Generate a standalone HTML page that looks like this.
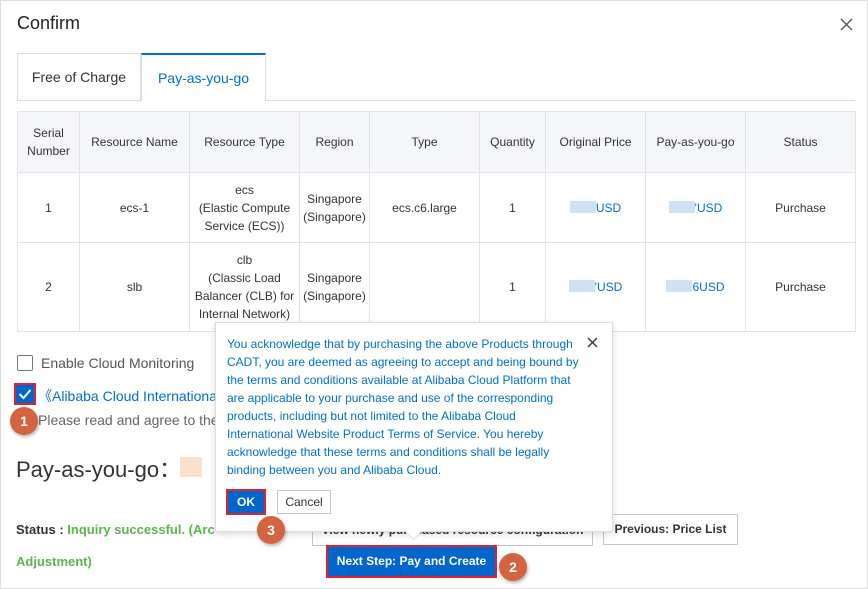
<!DOCTYPE html>
<html><head><meta charset="utf-8"><style>
*{box-sizing:border-box;margin:0;padding:0}
body{width:868px;height:589px;background:#fff;font-family:"Liberation Sans",sans-serif;color:#333;position:relative;overflow:hidden}
.frame{position:absolute;left:0;top:0;width:868px;height:589px;border:1px solid #ddd}
.a{position:absolute}
table{position:absolute;left:17px;top:111px;border-collapse:collapse;font-size:12px;color:#333}
td{border:1px solid #e3e3e3;text-align:center;line-height:18px;padding:0 3px}
thead td{background:#f5f6fa;height:61px}
.blur{display:inline-block;width:26px;height:12px;background:#cfe2f5;vertical-align:-1px}
.blue{color:#0070cc}
.badge{position:absolute;width:28px;height:28px;border-radius:50%;background:#d4633f;color:#fff;font-weight:bold;font-size:14px;text-align:center;line-height:28px;box-shadow:1px 2px 3px rgba(0,0,0,.3)}
.btn{position:absolute;border:1px solid #c4c6cc;background:#fff;font-size:12px;font-weight:bold;color:#333;text-align:center}
</style></head><body>
<div class="frame"></div>
<div class="a" style="left:17px;top:13px;font-size:18px;color:#222">Confirm</div>
<svg class="a" style="left:840px;top:18px" width="13" height="13"><path d="M1 1L12 12M12 1L1 12" stroke="#555" stroke-width="1.4"/></svg>
<div class="a" style="left:17px;top:100px;width:838px;border-top:1px solid #ddd"></div>
<div class="a" style="left:17px;top:53px;width:124px;height:47px;border:1px solid #ddd;border-bottom:none;background:#fff;font-size:14px;line-height:46px;text-align:center;color:#333">Free of Charge</div>
<div class="a" style="left:141px;top:53px;width:125px;height:48px;border:1px solid #ddd;border-top:2px solid #0070cc;border-bottom:none;background:#fff;font-size:14px;line-height:46px;text-align:center;color:#0070cc">Pay-as-you-go</div>
<table>
<thead><tr><td style="width:62px">Serial<br>Number</td><td style="width:110px">Resource Name</td><td style="width:110px">Resource Type</td><td style="width:70px">Region</td><td style="width:110px">Type</td><td style="width:66px">Quantity</td><td style="width:100px">Original Price</td><td style="width:100px">Pay-as-you-go</td><td style="width:110px">Status</td></tr></thead>
<tr style="height:70px"><td>1</td><td>ecs-1</td><td>ecs<br>(Elastic Compute<br>Service (ECS))</td><td>Singapore<br>(Singapore)</td><td>ecs.c6.large</td><td>1</td><td class="blue"><span class="blur"></span>USD</td><td class="blue"><span class="blur"></span>'USD</td><td>Purchase</td></tr>
<tr style="height:89px"><td>2</td><td>slb</td><td>clb<br>(Classic Load<br>Balancer (CLB) for<br>Internal Network)</td><td>Singapore<br>(Singapore)</td><td></td><td>1</td><td class="blue"><span class="blur"></span>'USD</td><td class="blue"><span class="blur"></span>6USD</td><td>Purchase</td></tr>
</table>
<div class="a" style="left:17px;top:355px;width:16px;height:16px;border:1px solid #777;border-radius:2px"></div>
<div class="a" style="left:41px;top:355px;font-size:14px;color:#555">Enable Cloud Monitoring</div>
<div class="a" style="left:14px;top:383px;width:22px;height:22px;border:2px solid #e0212e;background:#0066cc"><svg width="18" height="18"><path d="M3.5 9L7.5 13L14.5 5" stroke="#fff" stroke-width="2" fill="none"/></svg></div>
<div class="a" style="left:38px;top:386px;font-size:14px;color:#0070cc">《Alibaba Cloud International</div>
<div class="a" style="left:38px;top:412px;font-size:14px;color:#666">Please read and agree to the</div>
<div class="badge" style="left:10px;top:407px">1</div>
<div class="a" style="left:16px;top:452px;font-size:22px;color:#333">Pay-as-you-go：</div>
<div class="a" style="left:180px;top:457px;width:22px;height:20px;background:#fbe0cc"></div>
<div class="a" style="left:16px;top:522px;font-size:13px;font-weight:bold;color:#333">Status : <span style="color:#5ab74a">Inquiry successful. (Arc</span></div>
<div class="a" style="left:16px;top:554px;font-size:13px;font-weight:bold;color:#5ab74a">Adjustment)</div>
<div class="btn" style="left:312px;top:514px;width:281px;height:32px;line-height:30px">View newly purchased resource configuration</div>
<div class="btn" style="left:603px;top:514px;width:135px;height:31px;line-height:29px">Previous: Price List</div>
<div class="a" style="left:326px;top:545px;width:171px;height:33px;border:2px solid #e0212e;background:#0066cc;color:#fff;font-size:12px;font-weight:bold;text-align:center;line-height:29px">Next Step: Pay and Create</div>
<div class="badge" style="left:499px;top:553px">2</div>
<div class="a" style="left:215px;top:322px;width:398px;height:210px;background:#fff;border:1px solid #ddd;box-shadow:0 2px 6px rgba(0,0,0,.15)"></div>
<div class="a" style="left:408px;top:527px;width:11px;height:11px;background:#fff;border-right:1px solid #ddd;border-bottom:1px solid #ddd;transform:rotate(45deg)"></div>
<div class="a" style="left:227px;top:335px;width:355px;font-size:12px;line-height:18px;color:#0070cc">You acknowledge that by purchasing the above Products through CADT, you are deemed as agreeing to accept and being bound by the terms and conditions available at Alibaba Cloud Platform that are applicable to your purchase and use of the corresponding products, including but not limited to the Alibaba Cloud International Website Product Terms of Service. You hereby acknowledge that these terms and conditions shall be legally binding between you and Alibaba Cloud.</div>
<svg class="a" style="left:587px;top:337px" width="11" height="11"><path d="M1 1L10 10M10 1L1 10" stroke="#333" stroke-width="1.4"/></svg>
<div class="a" style="left:226px;top:489px;width:40px;height:26px;border:2px solid #e0212e;background:#0066cc;color:#fff;font-size:12px;font-weight:bold;text-align:center;line-height:22px">OK</div>
<div class="btn" style="left:277px;top:490px;width:54px;height:24px;line-height:22px;font-weight:normal">Cancel</div>
<div class="badge" style="left:257px;top:516px">3</div>
</body></html>
